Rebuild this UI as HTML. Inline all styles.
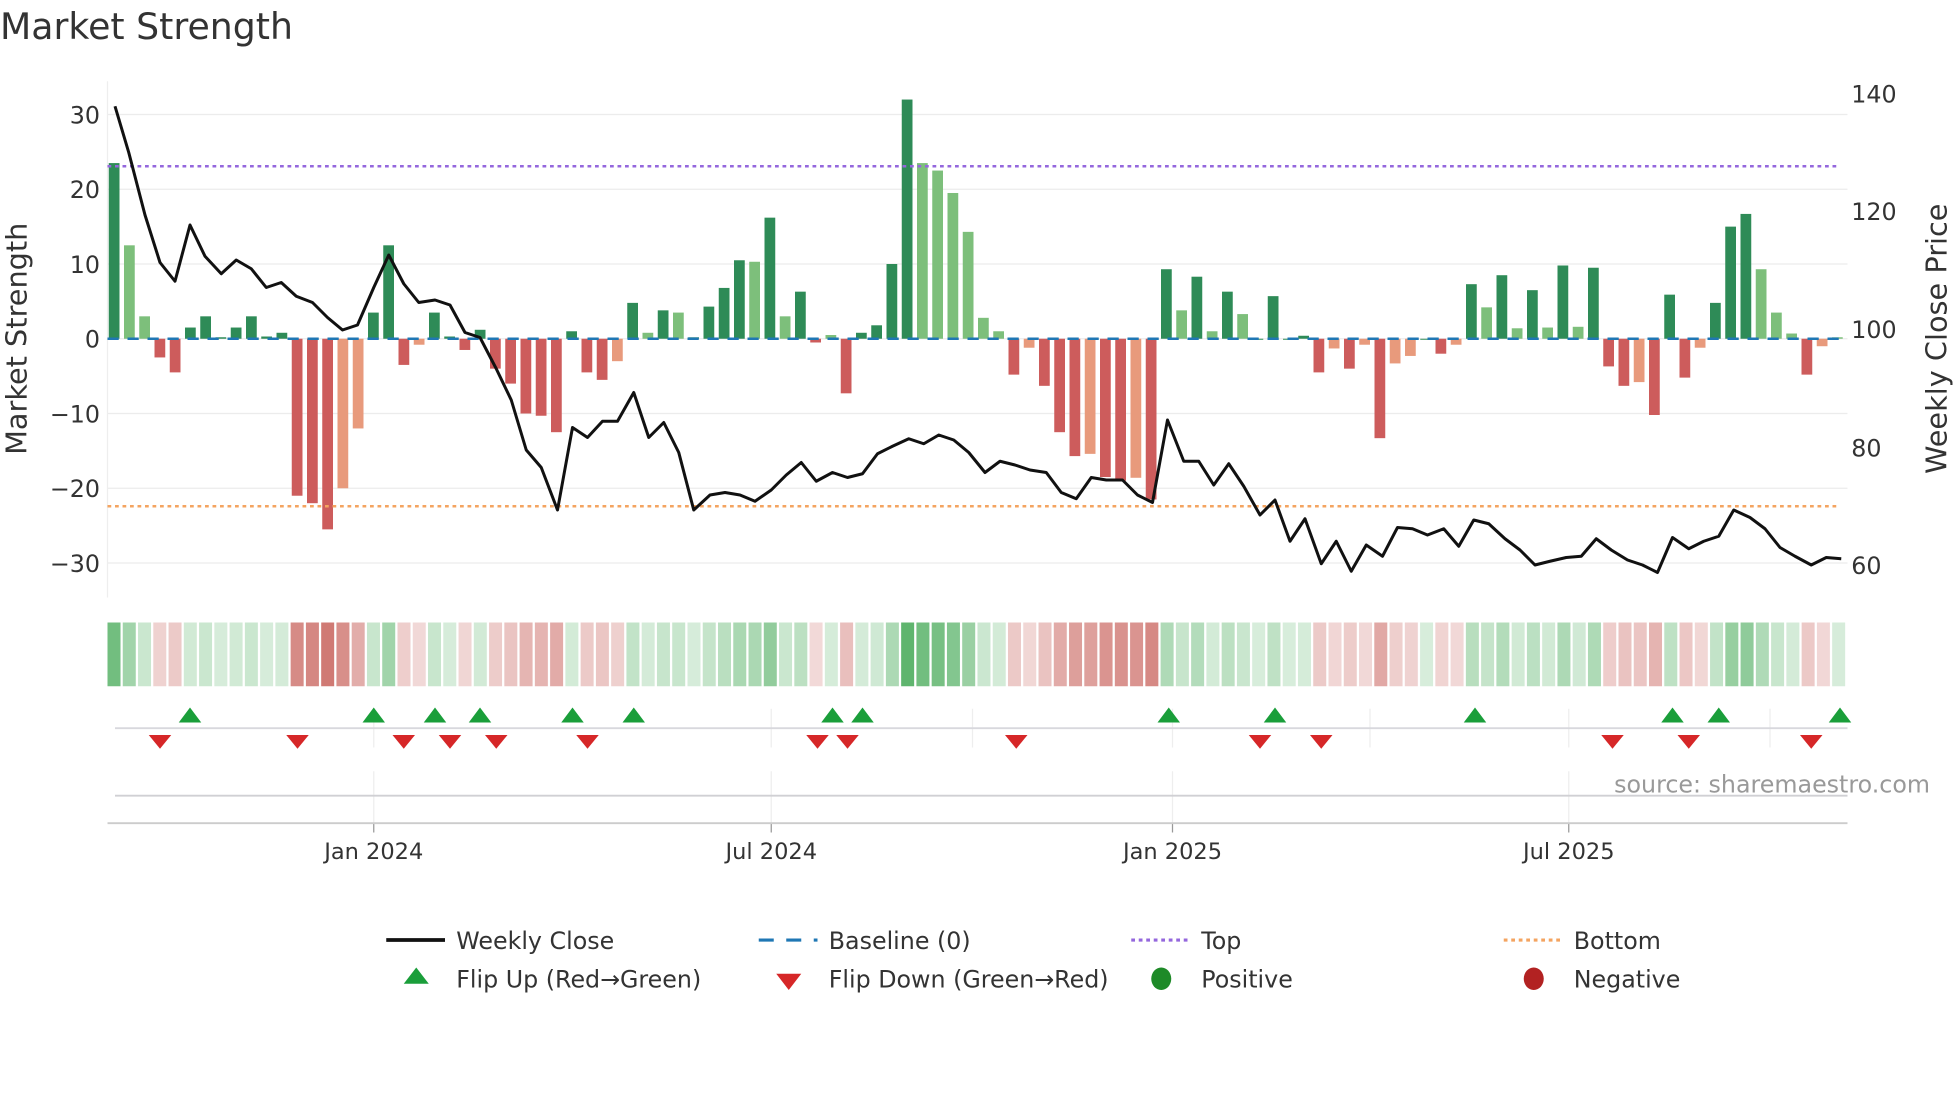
<!DOCTYPE html>
<html><head><meta charset="utf-8"><style>
html,body{margin:0;padding:0;background:#fff;width:1960px;height:1102px;overflow:hidden}
svg{display:block}
text{font-family:"DejaVu Sans","Liberation Sans",sans-serif}
</style></head><body>
<svg id="s" width="1960" height="1102" viewBox="0 0 1568 881.6" xmlns="http://www.w3.org/2000/svg"></svg>
<script>
const vals=[23.5,12.5,3,-2.5,-4.5,1.5,3,0.2,1.5,3,0.3,0.8,-21,-22,-25.5,-20,-12,3.5,12.5,-3.5,-0.8,3.5,0.3,-1.5,1.2,-4,-6,-10,-10.3,-12.5,1,-4.5,-5.5,-3,4.8,0.8,3.8,3.5,0.2,4.3,6.8,10.5,10.3,16.2,3,6.3,-0.5,0.5,-7.3,0.8,1.8,10,32,23.5,22.5,19.5,14.3,2.8,1,-4.8,-1.2,-6.3,-12.5,-15.7,-15.4,-18.5,-19,-18.6,-21.5,9.3,3.8,8.3,1,6.3,3.3,0,5.7,0,0.4,-4.5,-1.3,-4,-0.8,-13.3,-3.3,-2.3,0,-2,-0.8,7.3,4.2,8.5,1.4,6.5,1.5,9.8,1.6,9.5,-3.7,-6.3,-5.8,-10.2,5.9,-5.2,-1.2,4.8,15,16.7,9.3,3.5,0.7,-4.8,-1,0.2];
const light=new Set([1,2,15,16,20,33,35,37,42,44,47,53,54,55,56,57,58,60,64,67,70,72,74,80,82,84,85,88,90,92,94,96,100,104,108,109,110,112,113]);
const price=[[92,85],[103,122],[116,172],[128,210],[140,225],[152,180],[164,205],[177,219],[189,208],[201,215],[213,230],[225,226],[237,237],[250,242],[262,254],[274,264],[286,260],[299,230],[311,204],[323,227],[335,242],[348,240],[360,244],[372,266],[384,270],[397,295],[409,320],[421,360],[433,374],[446,408],[458,342],[470,350],[482,337],[494,337],[507,314],[519,350],[531,338],[543,362],[555,408],[568,396],[580,394],[592,396],[604,401],[617,392],[629,380],[641,370],[653,385],[666,378],[678,382],[690,379],[702,363],[714,357],[727,351],[739,355],[751,348],[763,352],[775,362],[788,378],[800,369],[812,372],[824,376],[837,378],[849,394],[861,399],[873,382],[885,384],[898,384],[910,396],[922,402],[934,336],[947,369],[959,369],[971,388],[983,371],[995,389],[1008,412],[1020,400],[1032,433],[1044,415],[1057,451],[1069,433],[1081,457],[1093,436],[1106,445],[1118,422],[1130,423],[1142,428],[1155,423],[1167,437],[1179,416],[1191,419],[1204,431],[1216,440],[1228,452],[1240,449],[1253,446],[1265,445],[1277,431],[1289,440],[1302,448],[1314,452],[1326,458],[1338,430],[1351,439],[1363,433],[1375,429],[1387,408],[1400,414],[1412,423],[1424,438],[1436,445],[1449,452],[1461,446],[1473,447]];
const ups=[152,299,348,384,458,507,666,690,935,1020,1180,1338,1375,1472];
const downs=[128,238,323,360,397,470,654,678,813,1008,1057,1290,1351,1449];
let h='';
const Y=v=>271-v*5.98;
[30,20,10,0,-10,-20,-30].forEach(v=>{h+=`<line x1="86" x2="1478" y1="${Y(v)}" y2="${Y(v)}" stroke="#ececec" stroke-width="1"/>`;
h+=`<text x="80" y="${Y(v)+7}" font-size="19" text-anchor="end" fill="#333">${v<0?'\u2212'+(-v):v}</text>`;});
h+=`<line x1="86" x2="86" y1="65" y2="478" stroke="#eee"/>`;
[[140,75],[120,169],[100,263.5],[80,358],[60,452]].forEach(a=>h+=`<text x="1481" y="${a[1]+7}" font-size="19" fill="#333">${a[0]}</text>`);
vals.forEach((v,i)=>{const x=91+12.2*i-4;let c;
 if(v>=0)c=light.has(i)?'#7dbf7b':'#2e8b57';else c=light.has(i)?'#e89a7c':'#cd5c5c';
 const y0=Y(Math.max(v,0)),hh=Math.abs(v)*5.98;
 h+=`<rect x="${x}" y="${y0}" width="8.6" height="${Math.max(hh,0.8)}" fill="${c}"/>`;});
h+=`<line x1="86" x2="1478" y1="271" y2="271" stroke="#1f77b4" stroke-width="2" stroke-dasharray="9,7"/>`;
h+=`<line x1="86" x2="1472" y1="133" y2="133" stroke="#9467dd" stroke-width="2" stroke-dasharray="3,3"/>`;
h+=`<line x1="86" x2="1472" y1="405" y2="405" stroke="#f4a460" stroke-width="2" stroke-dasharray="3,3"/>`;
h+=`<polyline fill="none" stroke="#111" stroke-width="2.4" stroke-linejoin="round" points="${price.map(p=>p.join(',')).join(' ')}"/>`;
vals.forEach((v,i)=>{const x=86+12.21*i;const t=0.25+0.75*Math.min(Math.abs(v)/28,1);
 const base=v>=0?[95,181,110]:[205,112,106];const c=base.map(b=>Math.round(255-(255-b)*t));
 h+=`<rect x="${x}" y="498" width="10.4" height="51" fill="rgb(${c})"/>`;});
[299,617,938,1255,778,1096,1416].forEach(x=>h+=`<line x1="${x}" x2="${x}" y1="567" y2="598" stroke="#eee"/>`);
h+=`<line x1="92" x2="1478" y1="582.5" y2="582.5" stroke="#d8d8dd" stroke-width="1.5"/>`;
ups.forEach(x=>h+=`<polygon points="${x-9},578 ${x+9},578 ${x},566" fill="#1a9e3a"/>`);
downs.forEach(x=>h+=`<polygon points="${x-9},588 ${x+9},588 ${x},599" fill="#d62728"/>`);
[299,617,938,1255].forEach(x=>{h+=`<line x1="${x}" x2="${x}" y1="617" y2="658" stroke="#eee"/><line x1="${x}" x2="${x}" y1="658" y2="666" stroke="#999"/>`;});
h+=`<line x1="92" x2="1478" y1="636.5" y2="636.5" stroke="#d0d0d4" stroke-width="1.5"/>`;
h+=`<line x1="86" x2="1478" y1="658.5" y2="658.5" stroke="#ccc" stroke-width="1.5"/>`;
h+=`<text x="1544" y="634" font-size="19" text-anchor="end" fill="#999">source: sharemaestro.com</text>`;
[['Jan 2024',299],['Jul 2024',617],['Jan 2025',938],['Jul 2025',1255]].forEach(a=>h+=`<text x="${a[1]}" y="687" font-size="18" text-anchor="middle" fill="#333">${a[0]}</text>`);
h+=`<text x="0" y="31" font-size="29" fill="#333">Market Strength</text>`;
h+=`<text transform="translate(21,271) rotate(-90)" font-size="23" text-anchor="middle" fill="#333">Market Strength</text>`;
h+=`<text transform="translate(1557,271) rotate(-90)" font-size="23" text-anchor="middle" fill="#333">Weekly Close Price</text>`;
const L=(x,y,sym,t)=>{h+=sym+`<text x="${x}" y="${y+7}" font-size="19" fill="#333">${t}</text>`;};
L(365,752,`<line x1="309" x2="356" y1="752" y2="752" stroke="#111" stroke-width="3"/>`,'Weekly Close');
L(663,752,`<line x1="607" x2="654" y1="752" y2="752" stroke="#1f77b4" stroke-width="2.5" stroke-dasharray="12,10"/>`,'Baseline (0)');
L(961,752,`<line x1="905" x2="952" y1="752" y2="752" stroke="#9467dd" stroke-width="2.5" stroke-dasharray="3,3"/>`,'Top');
L(1259,752,`<line x1="1203" x2="1250" y1="752" y2="752" stroke="#f4a460" stroke-width="2.5" stroke-dasharray="3,3"/>`,'Bottom');
L(365,783,`<polygon points="323,787 343,787 333,774" fill="#1a9e3a"/>`,'Flip Up (Red\u2192Green)');
L(663,783,`<polygon points="621,779 641,779 631,792" fill="#d62728"/>`,'Flip Down (Green\u2192Red)');
L(961,783,`<ellipse cx="929" cy="783" rx="8" ry="9" fill="#1e8a28"/>`,'Positive');
L(1259,783,`<ellipse cx="1227" cy="783" rx="8" ry="9" fill="#b22222"/>`,'Negative');
document.getElementById('s').innerHTML=h;
</script>
</body></html>
